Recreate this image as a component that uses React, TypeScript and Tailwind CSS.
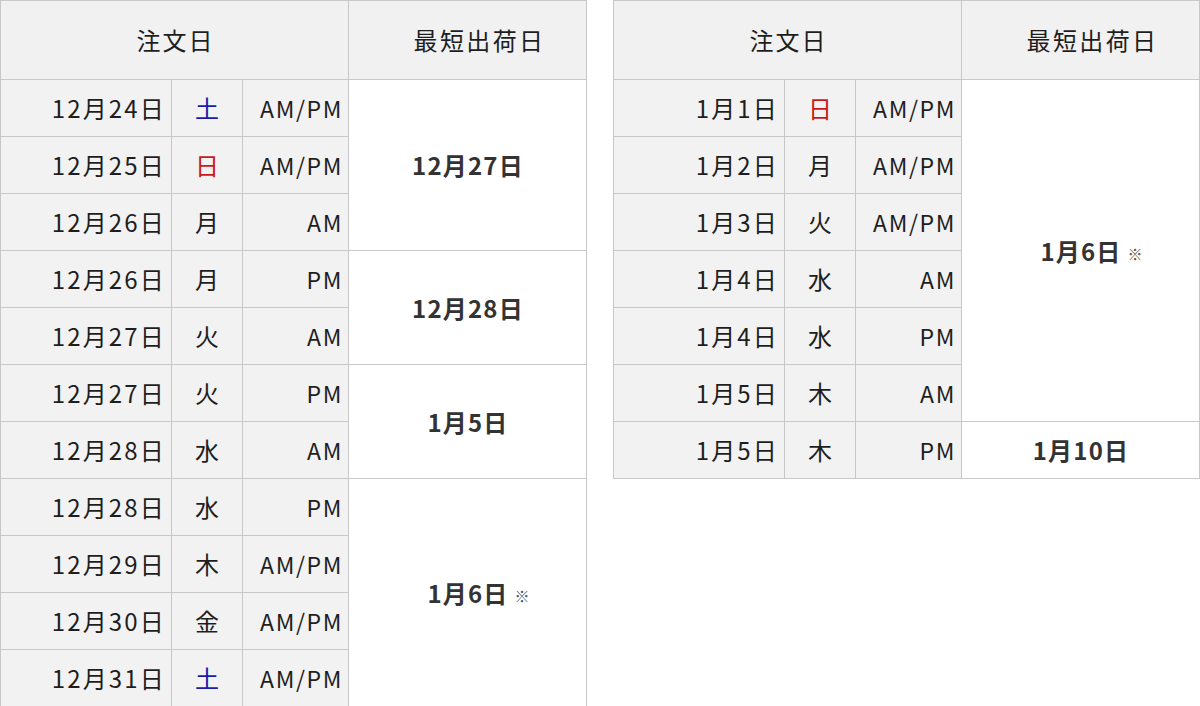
import React from "react";

type Row = { date: string; day: string; time: string; dayColor?: "blue" | "red" };
type Group = { rows: Row[]; ship: string; note?: boolean };

const left: Group[] = [
  {
    ship: "12月27日",
    rows: [
      { date: "12月24日", day: "土", time: "AM/PM", dayColor: "blue" },
      { date: "12月25日", day: "日", time: "AM/PM", dayColor: "red" },
      { date: "12月26日", day: "月", time: "AM" },
    ],
  },
  {
    ship: "12月28日",
    rows: [
      { date: "12月26日", day: "月", time: "PM" },
      { date: "12月27日", day: "火", time: "AM" },
    ],
  },
  {
    ship: "1月5日",
    rows: [
      { date: "12月27日", day: "火", time: "PM" },
      { date: "12月28日", day: "水", time: "AM" },
    ],
  },
  {
    ship: "1月6日",
    note: true,
    rows: [
      { date: "12月28日", day: "水", time: "PM" },
      { date: "12月29日", day: "木", time: "AM/PM" },
      { date: "12月30日", day: "金", time: "AM/PM" },
      { date: "12月31日", day: "土", time: "AM/PM", dayColor: "blue" },
    ],
  },
];

const right: Group[] = [
  {
    ship: "1月6日",
    note: true,
    rows: [
      { date: "1月1日", day: "日", time: "AM/PM", dayColor: "red" },
      { date: "1月2日", day: "月", time: "AM/PM" },
      { date: "1月3日", day: "火", time: "AM/PM" },
      { date: "1月4日", day: "水", time: "AM" },
      { date: "1月4日", day: "水", time: "PM" },
      { date: "1月5日", day: "木", time: "AM" },
    ],
  },
  {
    ship: "1月10日",
    rows: [{ date: "1月5日", day: "木", time: "PM" }],
  },
];

function Table({ groups }: { groups: Group[] }) {
  return (
    <table className="w-[586px] table-fixed border-collapse border border-[#c8c8c8] text-[#1e1e1e]">
      <colgroup>
        <col className="w-[171px]" />
        <col className="w-[71px]" />
        <col className="w-[106px]" />
        <col className="w-[238px]" />
      </colgroup>
      <thead>
        <tr className="h-[79px] bg-[#f1f1f1]">
          <th colSpan={3} className="border border-[#c8c8c8] pl-[2px] text-[24px] font-normal tracking-[0.08em] text-center">
            注文日
          </th>
          <th className="border border-[#c8c8c8] pl-[24px] text-[24px] font-normal tracking-[0.1em] text-center">
            最短出荷日
          </th>
        </tr>
      </thead>
      <tbody>
        {groups.map((g, gi) =>
          g.rows.map((r, ri) => (
            <tr key={`${gi}-${ri}`} className="h-[57px]">
              <td className="border border-[#c8c8c8] bg-[#f2f2f2] pr-[5px] text-right text-[24px] tracking-[0.09em]">
                {r.date}
              </td>
              <td
                className={
                  "border border-[#c8c8c8] bg-[#f2f2f2] text-center text-[24px] " +
                  (r.dayColor === "blue" ? "text-[#1a1aa6]" : r.dayColor === "red" ? "text-[#c81a1a]" : "")
                }
              >
                {r.day}
              </td>
              <td className="border border-[#c8c8c8] bg-[#f2f2f2] pr-[5px] text-right text-[23px] tracking-[0.07em]">
                {r.time}
              </td>
              {ri === 0 && (
                <td rowSpan={g.rows.length} className="border border-[#c8c8c8] bg-white text-center">
                  <span className="relative inline-block pl-[1px] text-[24px] font-bold text-[#333333] tracking-[0.05em]">
                    {g.ship}
                    {g.note && (
                      <span className="absolute left-full top-[10px] ml-[6px] text-[15px] font-normal text-[#555555]">
                        ※
                      </span>
                    )}
                  </span>
                </td>
              )}
            </tr>
          ))
        )}
      </tbody>
    </table>
  );
}

export default function App() {
  return (
    <div
      className="flex w-[1200px] h-[706px] items-start gap-[26px] bg-white"
      style={{ fontFamily: '"Noto Sans CJK JP", "Noto Sans", sans-serif' }}
    >
      <Table groups={left} />
      <Table groups={right} />
    </div>
  );
}
